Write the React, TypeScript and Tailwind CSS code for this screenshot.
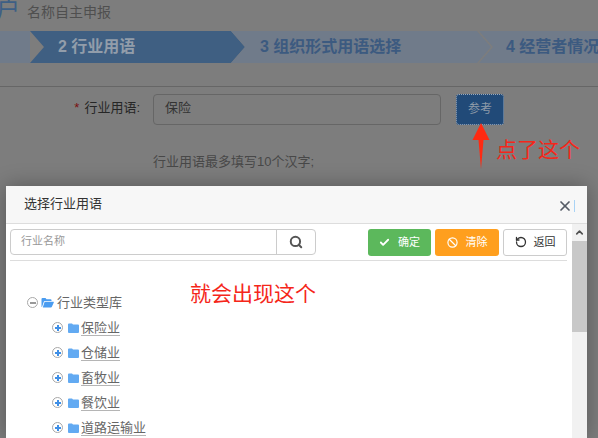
import React from "react";
import { Check, Ban, RotateCcw, Search, X, ChevronUp } from "lucide-react";

const FONT = "font-['Liberation_Sans','Noto_Sans_CJK_SC',sans-serif]";

// 树节点
const nodes = ["保险业", "仓储业", "畜牧业", "餐饮业", "道路运输业"];

const Folder = ({ open }: { open?: boolean }) =>
  open ? (
    <svg width="13" height="11" viewBox="0 0 13 11" className="shrink-0">
      <path d="M0.5 9.5V2q0-1 1-1h3l1 1.2h4q1 0 1 1V4H4q-.8 0-1.2.8L1 10H1q-.5 0-.5-.5zM4.2 4.8H12.5q.5 0 .3.6L11 9.6q-.3.9-1.2.9H1.8L3.4 5.5q.2-.7.8-.7z" fill="#4a9cf0" />
    </svg>
  ) : (
    <svg width="11" height="10" viewBox="0 0 11 10" className="shrink-0">
      <path d="M0 1.5q0-1 1-1h3l1 1h5q1 0 1 1V9q0 1-1 1H1q-1 0-1-1z" fill="#62aaf2" />
    </svg>
  );

const Toggle = ({ minus }: { minus?: boolean }) => (
  <span className="relative flex h-[11px] w-[11px] shrink-0 items-center justify-center rounded-full border border-[#a8a8a8] bg-white">
    <span className={`h-[2px] w-[6px] ${minus ? "bg-[#999999]" : "bg-[#3f8fe6]"}`} />
    {!minus && <span className="absolute h-[6px] w-[2px] bg-[#3f8fe6]" />}
  </span>
);

const Step = ({ label, active, className }: { label: string; active?: boolean; className: string }) => (
  <div
    className={`flex h-[32px] items-center text-[16px] font-bold [clip-path:polygon(0_0,calc(100%-14px)_0,100%_50%,calc(100%-14px)_100%,0_100%,14px_50%)] ${
      active ? "bg-[#3f5f82] text-[#929daa]" : "bg-[#707b8a] text-[#3c5a80]"
    } ${className}`}
  >
    {label}
  </div>
);

export default function App() {
  return (
    <div className={`relative h-[438px] w-[598px] overflow-hidden bg-[#7d7d7d] ${FONT}`}>
      {/* 背景页面 */}
      <div className="flex h-[31px] items-start">
        <span className="-ml-[4px] -mt-[5px] text-[24px] leading-[30px] text-[#3d5f85]">户</span>
        <span className="ml-[7px] mt-[3px] text-[14px] leading-[18px] text-[#4f4f4f]">名称自主申报</span>
      </div>

      <div className="flex h-[32px] overflow-hidden">
        <div className="-ml-[14px] w-[44px] shrink-0 bg-[#707b8a]" />
        <Step label="2 行业用语" active className="w-[215px] shrink-0 pl-[28px]" />
        <Step label="3 组织形式用语选择" className="-ml-[14px] w-[260px] shrink-0 pl-[29px]" />
        <Step label="4 经营者情况" className="-ml-[12px] w-[140px] shrink-0 pl-[27px]" />
      </div>

      <div className="mt-[23px] h-px bg-[#666666]" />

      <div className="mt-[7px] flex h-[31px] items-center">
        <span className="w-[140px] pb-[3px] text-right text-[13px] text-[#262626]">
          <span className="mr-[5px] text-[#7a1010]">*</span>行业用语:
        </span>
        <div className="ml-[13px] flex h-[31px] w-[288px] items-center rounded border border-[#666666] pb-[3px] pl-[11px] text-[13px] text-[#333333]">
          保险
        </div>
        <div className="ml-[15px] flex h-[31px] w-[48px] items-center justify-center rounded-[3px] border border-dotted border-[#9aa9bb] bg-[#214a78] pb-[2px] text-[12px] text-[#8e9aa8]">
          参考
        </div>
      </div>

      <div className="ml-[153px] mt-[28px] text-[13px] leading-[17px] text-[#484848]">行业用语最多填写10个汉字;</div>

      {/* 标注 */}
      <svg width="18" height="46" viewBox="0 0 18 46" className="absolute left-[472px] top-[123px]">
        <path d="M9 0L17.5 17H11.5L9 46L6.5 17H0.5Z" fill="#ff2a12" />
      </svg>
      <span className="absolute left-[496px] top-[137px] text-[21px] leading-[26px] text-[#f5261a]">点了这个</span>

      {/* 弹窗 */}
      <div className="absolute left-[6px] top-[186px] flex h-[252px] w-[581px] flex-col bg-white shadow-[0_0_20px_rgba(0,0,0,0.3)]">
        <div className="relative flex h-[38px] shrink-0 items-center justify-between border-b border-[#dddddd] bg-[#f7f7f7] pl-[18px] pr-[14px]">
          <span className="pb-[2px] text-[13px] text-[#333333]">选择行业用语</span>
          <X size={16} strokeWidth={2.6} className="mt-[2px] text-[#555b66]" />
          <span className="absolute left-[568px] top-[14px] h-[12px] w-px bg-[#a9d3f5]" />
        </div>

        <div className="flex min-h-0 flex-1">
          <div className="min-w-0 flex-1">
            <div className="ml-[4px] mr-[5px] mt-[5px] flex h-[32px] items-start justify-between border-b border-[#dddddd]">
              <div className="flex h-[26px] w-[306px] rounded border border-[#cccccc]">
                <span className="flex-1 pl-[10px] text-[11px] leading-[23px] text-[#999999]">行业名称</span>
                <span className="flex w-[39px] items-center justify-center border-l border-[#cccccc]">
                  <Search size={14} strokeWidth={3.4} className="text-[#555555]" />
                </span>
              </div>
              <div className="flex gap-[4px]">
                <div className="flex h-[27px] w-[63px] items-center justify-center gap-[8px] rounded-[3px] bg-[#5cb85c] pb-[1px] text-[11px] text-white">
                  <Check size={11} strokeWidth={4} />
                  确定
                </div>
                <div className="flex h-[27px] w-[64px] items-center justify-center gap-[8px] rounded-[3px] bg-[#ff9f1e] pb-[1px] text-[11px] text-white">
                  <Ban size={11} strokeWidth={2.6} />
                  清除
                </div>
                <div className="flex h-[27px] w-[64px] items-center justify-center gap-[7px] rounded-[3px] border border-[#cccccc] bg-white pb-[1px] text-[11px] text-[#333333]">
                  <RotateCcw size={12} strokeWidth={2.6} />
                  返回
                </div>
              </div>
            </div>

            <div className="relative pl-[21px] pt-[29px]">
              <div className="flex h-[25px] items-center text-[13px] text-[#666666]">
                <Toggle minus />
                <span className="ml-[3px] flex"><Folder open /></span>
                <span className="ml-[3px]">行业类型库</span>
              </div>
              {nodes.map((name) => (
                <div key={name} className="flex h-[25px] items-center pl-[25px] text-[13px] text-[#666666]">
                  <Toggle />
                  <span className="ml-[5px] flex"><Folder /></span>
                  <span className="ml-[2px] border-b border-[#b5b5b5] leading-[15px]">{name}</span>
                </div>
              ))}
              <span className="absolute left-[184px] top-[20px] text-[21px] leading-[26px] text-[#f5261a]">就会出现这个</span>
            </div>
          </div>

          {/* 滚动条 */}
          <div className="flex w-[15px] shrink-0 flex-col bg-[#f1f1f1]">
            <div className="flex h-[17px] items-center justify-center">
              <ChevronUp size={11} strokeWidth={3.5} className="text-[#505050]" />
            </div>
            <div className="h-[91px] bg-[#c8c8c8]" />
          </div>
        </div>
      </div>
    </div>
  );
}
